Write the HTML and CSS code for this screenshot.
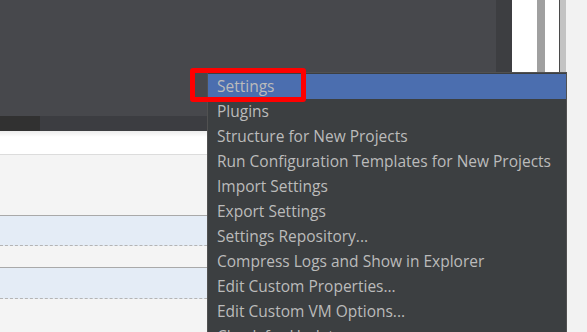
FILE: index.html
```html
<!DOCTYPE html>
<html>
<head>
<meta charset="utf-8">
<link rel="stylesheet" href="styles.css">
</head>
<body>
<div class="page">
  <div class="main">
    <div class="top">
      <div class="panel"></div>
      <div class="shadow"></div>
      <div class="col-white w25"></div>
      <div class="col-gray"></div>
      <div class="col-white w14"></div>
      <div class="col-line"></div>
      <div class="col-light"></div>
    </div>
    <div class="strip">
      <div class="strip-dark"></div>
      <div class="strip-mid"></div>
    </div>
    <div class="row white"></div>
    <div class="row grey h60 solid"></div>
    <div class="row blue h29 dashed"></div>
    <div class="row grey h21 solid"></div>
    <div class="row blue h30 dashed"></div>
    <div class="row grey fill"></div>
  </div>
  <div class="side"></div>
</div>

<div class="menu">
  <div class="item active">Settings</div>
  <div class="item">Plugins</div>
  <div class="item">Structure for New Projects</div>
  <div class="item">Run Configuration Templates for New Projects</div>
  <div class="item">Import Settings</div>
  <div class="item">Export Settings</div>
  <div class="item">Settings Repository...</div>
  <div class="item">Compress Logs and Show in Explorer</div>
  <div class="item">Edit Custom Properties...</div>
  <div class="item">Edit Custom VM Options...</div>
  <div class="item">Check for Updates...</div>
</div>

<div class="highlight-box"></div>
</body>
</html>
```

FILE: styles.css
```css
html, body {
  margin: 0;
  padding: 0;
  width: 587px;
  height: 332px;
  overflow: hidden;
  background: #f2f2f2;
}

.page {
  display: flex;
  height: 332px;
}

.main {
  width: 566px;
  display: flex;
  flex-direction: column;
}

.side {
  flex: 1;
  background: #f2f2f2;
}

.top {
  display: flex;
  height: 116px;
}

.panel {
  width: 496px;
  background: #47484c;
}

.shadow {
  width: 16px;
  background: #3d3e41;
}

.col-white { background: #ffffff; }
.w25 { width: 25px; }
.w14 { width: 14px; }

.col-gray {
  width: 8px;
  background: #a0a0a0;
}

.col-line {
  width: 1px;
  background: #4a4a4a;
}

.col-light {
  width: 6px;
  background: #c3c3c3;
}

.strip {
  display: flex;
  height: 15px;
}

.strip-dark {
  width: 40px;
  background: #313131;
}

.strip-mid {
  width: 456px;
  background: #3c3d41;
}

.row {
  box-sizing: border-box;
}

.white {
  height: 24px;
  background: linear-gradient(#ececec 0px, #ffffff 6px);
  border-bottom: 1px solid #dcdcdc;
}

.grey { background: #f4f4f4; }
.blue { background: #e4ecf6; }

.h60 { height: 61px; }
.h29 { height: 30px; }
.h21 { height: 22px; }
.h30 { height: 31px; }

.solid { border-bottom: 1px solid #a9a9a9; }
.dashed { border-bottom: 1px dashed #b4b4b4; }

.fill { flex: 1; }

.menu {
  position: absolute;
  left: 207px;
  top: 72px;
  width: 360px;
  box-sizing: border-box;
  border: 1px solid #515151;
  border-bottom: none;
  padding-top: 1px;
  background: #3c3f41;
  font-family: "Open Sans", "Noto Sans", sans-serif;
  font-size: 15.5px;
  color: #bbbbbb;
}

.item {
  height: 25px;
  line-height: 25px;
  padding-left: 9px;
  white-space: nowrap;
}

.item.active {
  background: #4b6eaf;
}

.highlight-box {
  position: absolute;
  left: 190px;
  top: 68px;
  width: 116px;
  height: 34px;
  box-sizing: border-box;
  border: 5px solid #ff0000;
  border-radius: 3px;
}
```
